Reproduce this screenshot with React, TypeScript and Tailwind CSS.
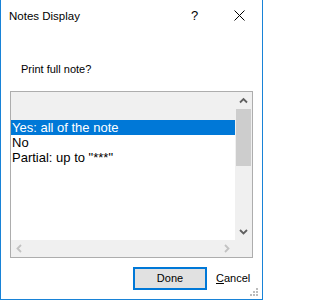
import React from "react";

const FONT = { fontFamily: '"Liberation Sans", Arial, sans-serif' };

function Chevron({ dir, color }: { dir: "up" | "down" | "left" | "right"; color: string }) {
  const d = {
    up: "M5 10.5 L8.5 7 L12 10.5",
    down: "M5 7 L8.5 10.5 L12 7",
    left: "M10 5 L6.5 8.5 L10 12",
    right: "M7 5 L10.5 8.5 L7 12",
  }[dir];
  return (
    <svg width="17" height="17" viewBox="0 0 17 17" className="block">
      <path d={d} fill="none" stroke={color} strokeWidth="1.8" />
    </svg>
  );
}

const options = ["Yes: all of the note", "No", 'Partial: up to "***"'];

export default function App() {
  const selected = 0;

  return (
    <div
      className="relative w-[263px] h-[300px] bg-white border-l border-r border-b border-[#1883d7] flex flex-col text-black select-none"
      style={FONT}
    >
      {/* title bar */}
      <div className="h-[31px] flex items-center">
        <span className="pl-[8px] text-[11.5px] leading-[16px]">Notes Display</span>
        <div className="ml-auto w-[45px] flex justify-center text-[13px] leading-[16px]">?</div>
        <div className="w-[45px] h-[31px] flex items-center justify-center">
          <svg width="11" height="11" viewBox="0 0 11 11">
            <path d="M0.5 0.5 L10.5 10.5 M10.5 0.5 L0.5 10.5" stroke="#000" strokeWidth="1" />
          </svg>
        </div>
      </div>

      <div className="mt-[32px] pl-[20px] text-[11px] leading-[13px]">Print full note?</div>

      {/* list box */}
      <div className="mt-[15px] ml-[9px] w-[243px] h-[167px] border border-[#adadad] grid grid-cols-[1fr_17px] grid-rows-[1fr_17px]">
        <div className="bg-white overflow-hidden">
          <div className="h-[28px] bg-[#f0f0f0]" />
          {options.map((o, i) => (
            <div
              key={o}
              className={
                i === selected
                  ? "h-[15px] pl-[1px] text-[13px] leading-[15px] whitespace-nowrap bg-[#0078d7] text-white"
                  : "h-[15px] pl-[1px] text-[13px] leading-[15px] whitespace-nowrap"
              }
            >
              {o}
            </div>
          ))}
        </div>
        <div className="bg-[#f0f0f0] flex flex-col">
          <Chevron dir="up" color="#606060" />
          <div className="mx-[1px] h-[57px] bg-[#cdcdcd]" />
          <div className="mt-auto">
            <Chevron dir="down" color="#606060" />
          </div>
        </div>
        <div className="bg-[#f0f0f0] flex items-center justify-between">
          <Chevron dir="left" color="#c2c2c2" />
          <Chevron dir="right" color="#c2c2c2" />
        </div>
        <div className="bg-[#f0f0f0]" />
      </div>

      {/* buttons */}
      <div className="mt-[9px] flex items-center pl-[132px]">
        <button className="w-[74px] h-[23px] border-2 border-[#0078d7] bg-[#e1e1e1] text-[11px] leading-[13px]">
          Done
        </button>
        <span className="ml-[9px] text-[11px] leading-[13px]">
          <span className="underline">C</span>ancel
        </span>
      </div>

      {/* resize grip */}
      <svg width="10" height="10" viewBox="0 0 10 10" className="absolute right-[3px] bottom-[2px]">
        <rect x="7" y="1" width="2" height="2" fill="#bcbcbc" />
        <rect x="4" y="4" width="2" height="2" fill="#bcbcbc" />
        <rect x="7" y="4" width="2" height="2" fill="#bcbcbc" />
        <rect x="1" y="7" width="2" height="2" fill="#bcbcbc" />
        <rect x="4" y="7" width="2" height="2" fill="#bcbcbc" />
        <rect x="7" y="7" width="2" height="2" fill="#bcbcbc" />
      </svg>
    </div>
  );
}
